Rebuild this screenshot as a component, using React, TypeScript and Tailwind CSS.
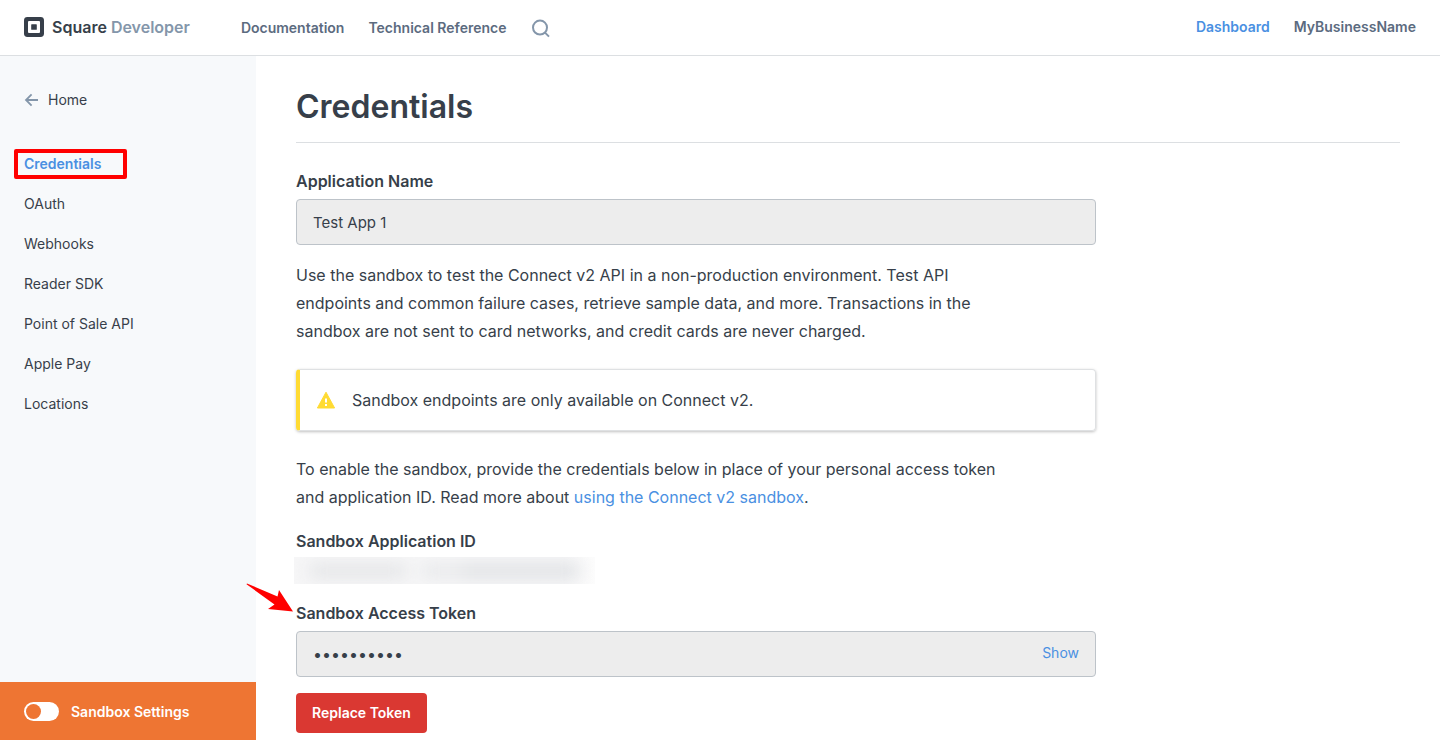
import React from "react";

const navItems = [
  "OAuth",
  "Webhooks",
  "Reader SDK",
  "Point of Sale API",
  "Apple Pay",
  "Locations",
];

function SquareLogo() {
  return (
    <svg width="20" height="20" viewBox="0 0 20 20" aria-hidden="true">
      <rect width="20" height="20" rx="3.4" fill="#373f4a" />
      <rect x="4" y="4" width="12" height="12" rx="1" fill="#fff" />
      <rect x="7.2" y="7.2" width="5.6" height="5.6" rx="0.6" fill="#373f4a" />
    </svg>
  );
}

function Header() {
  return (
    <header className="flex h-14 items-center border-b border-[#dcdfe2] px-6 text-sm font-semibold">
      <a href="#" className="mr-[51px] flex items-center gap-2 pb-px text-base text-[#373f4a]">
        <SquareLogo />
        <span>
          Square <span className="text-[#8496aa]">Developer</span>
        </span>
      </a>
      <nav className="flex items-center gap-6 text-[#5c6b7f]">
        <a href="#">Documentation</a>
        <a href="#">Technical Reference</a>
        <button type="button" aria-label="Search">
          <svg width="20" height="20" viewBox="0 0 20 20" fill="none" stroke="#8496aa" strokeWidth="2" aria-hidden="true">
            <circle cx="9" cy="9.6" r="7" />
            <path d="M14 14.6l4 4" />
          </svg>
        </button>
      </nav>
      <div className="ml-auto flex items-center gap-6 pb-px text-[#5c6b7f]">
        <a href="#" className="text-[#4a90e2]">Dashboard</a>
        <a href="#">MyBusinessName</a>
      </div>
    </header>
  );
}

function Sidebar() {
  return (
    <aside className="flex w-64 shrink-0 flex-col bg-[#f7f9fb] text-sm">
      <a href="#" className="mx-6 mt-6 flex h-10 items-center gap-2">
        <svg width="16" height="16" viewBox="0 0 16 16" fill="none" stroke="#8496aa" strokeWidth="1.8" aria-hidden="true">
          <path d="M14 8H2.5M7.6 2.4L2 8l5.6 5.6" />
        </svg>
        Home
      </a>
      <nav className="mt-6 flex flex-col">
        <div className="flex h-10 items-center px-[14px]">
          <a
            href="#"
            aria-current="page"
            className="flex h-[30px] w-[113px] items-center rounded-xs border-4 border-[#ff0000] px-1.5 font-semibold text-[#4a90e2]"
          >
            Credentials
          </a>
        </div>
        {navItems.map((item) => (
          <a key={item} href="#" className="flex h-10 items-center px-6">
            {item}
          </a>
        ))}
      </nav>
      <label className="mt-auto flex h-[58px] cursor-pointer items-center gap-3 bg-[#ee7533] px-6 pt-px font-semibold text-white">
        <input type="checkbox" role="switch" className="peer sr-only" />
        <span className="flex h-[19px] w-[35px] items-center rounded-full bg-white px-0.5 peer-checked:justify-end">
          <span className="size-[15px] rounded-full bg-[#ee7533]" />
        </span>
        Sandbox Settings
      </label>
    </aside>
  );
}

function RedactedValue() {
  return (
    <div className="-ml-0.5 mt-1 flex h-[27px] max-w-[301px] items-center overflow-hidden bg-linear-to-r from-[#f6f6f7] from-90% to-[#fcfcfc] px-4">
      <div className="flex w-full gap-4 blur-[8px]">
        <span className="h-3.5 w-24 bg-[#e4e5e7]" />
        <span className="h-3.5 w-10 bg-[#e8e9eb]" />
        <span className="-ml-4 h-3.5 flex-1 bg-[#dfe1e4]" />
      </div>
    </div>
  );
}

function PointerArrow() {
  return (
    <svg
      className="pointer-events-none absolute -left-[50px] -top-[19px]"
      width="48"
      height="30"
      viewBox="0 0 48 30"
      aria-hidden="true"
    >
      <path d="M1 1.5L31.5 14.5L33 8L47 29.5L22 27L28.5 22.5L0.5 2.2Z" fill="#ff0000" />
    </svg>
  );
}

export default function App() {
  return (
    <div className="flex min-h-screen flex-col bg-white font-[Inter,'Liberation_Sans',sans-serif] text-[#373f4a]">
      <Header />
      <div className="flex flex-1">
        <Sidebar />
        <main className="min-w-0 flex-1 px-10 pt-8 pb-[7px]">
          <h1 className="border-b border-[#dcdfe2] pb-4 text-[32px] leading-[38px] font-semibold">Credentials</h1>
          <form className="max-w-[800px] pt-[26px]" onSubmit={(e) => e.preventDefault()}>
            <label htmlFor="app-name" className="block text-base leading-6 font-semibold">
              Application Name
            </label>
            <input
              id="app-name"
              readOnly
              defaultValue="Test App 1"
              className="mt-1.5 block h-[46px] w-full rounded border border-[#bdc3c9] bg-[#ededed] px-4 text-[15px] outline-none"
            />
            <p className="mt-4 max-w-[700px] text-base leading-7">
              Use the sandbox to test the Connect v2 API in a non-production environment. Test API endpoints and common
              failure cases, retrieve sample data, and more. Transactions in the sandbox are not sent to card networks,
              and credit cards are never charged.
            </p>
            <div
              role="note"
              className="mt-6 flex h-[62px] items-center gap-4 rounded border border-l-4 border-[#dfe1e3] border-l-[#ffdb33] pl-4 shadow-[0_1px_3px_rgba(0,0,0,0.25)]"
            >
              <svg width="20" height="18" viewBox="0 0 20 18" aria-hidden="true">
                <path d="M10 1.2L18.6 17H1.4Z" fill="#ffdb33" stroke="#ffdb33" strokeWidth="1" strokeLinejoin="round" />
                <path d="M9 7.5h2v4H9zM9 13h2v2H9z" fill="#fff" />
              </svg>
              Sandbox endpoints are only available on Connect v2.
            </div>
            <p className="mt-6 max-w-[700px] text-base leading-7">
              To enable the sandbox, provide the credentials below in place of your personal access token and application
              ID. Read more about <a href="#" className="text-[#4a90e2]">using the Connect v2 sandbox</a>.
            </p>
            <h2 className="mt-[18px] text-base leading-6 font-semibold">Sandbox Application ID</h2>
            <RedactedValue />
            <div className="relative mt-[17px]">
              <PointerArrow />
              <label htmlFor="token" className="block text-base leading-6 font-semibold">
                Sandbox Access Token
              </label>
            </div>
            <div className="mt-1.5 flex h-[46px] items-center rounded border border-[#bdc3c9] bg-[#ededed] px-4">
              <input
                id="token"
                type="password"
                readOnly
                defaultValue="sandboxkey"
                className="min-w-0 flex-1 bg-transparent text-base outline-none"
              />
              <button type="button" className="pb-0.5 text-sm text-[#4a90e2]">
                Show
              </button>
            </div>
            <button type="button" className="mt-4 h-10 rounded bg-[#da3832] px-4 text-sm font-semibold text-white">
              Replace Token
            </button>
          </form>
        </main>
      </div>
    </div>
  );
}
